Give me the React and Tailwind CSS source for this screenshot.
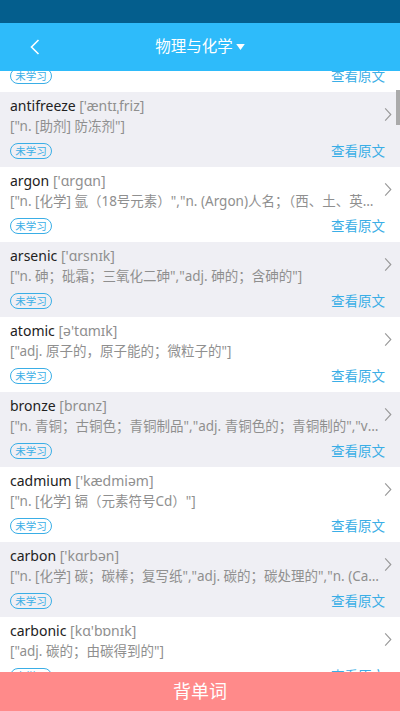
const words = [
  { word: "antibody", ph: "['æntɪˌbɑdi]", def: '["n. [免疫] 抗体"]' },
  { word: "antifreeze", ph: "['æntɪˌfriz]", def: '["n. [助剂] 防冻剂"]' },
  { word: "argon", ph: "['ɑrɡɑn]", def: '["n. [化学] 氩（18号元素）","n. (Argon)人名；（西、土、英）阿尔冈"]' },
  { word: "arsenic", ph: "['ɑrsnɪk]", def: '["n. 砷；砒霜；三氧化二砷","adj. 砷的；含砷的"]' },
  { word: "atomic", ph: "[ə'tɑmɪk]", def: '["adj. 原子的，原子能的；微粒子的"]' },
  { word: "bronze", ph: "[brɑnz]", def: '["n. 青铜；古铜色；青铜制品","adj. 青铜色的；青铜制的","vt. 镀青铜"]' },
  { word: "cadmium", ph: "['kædmiəm]", def: '["n. [化学] 镉（元素符号Cd）"]' },
  { word: "carbon", ph: "['kɑrbən]", def: '["n. [化学] 碳；碳棒；复写纸","adj. 碳的；碳处理的","n. (Carbon)人名"]' },
  { word: "carbonic", ph: "[kɑ'bɒnɪk]", def: '["adj. 碳的；由碳得到的"]' },
]

const Chevron = ({ className }) => (
  <svg viewBox="0 0 8 16" className={className} fill="none" stroke="currentColor" strokeWidth="1.2">
    <path d="M1 1.5 L7 8 L1 14.5" />
  </svg>
)

const WordRow = ({ item, gray }) => {
  return (
    <div className={`flex h-[75px] pl-[10px] ${gray ? "bg-[#efeff4]" : "bg-white"}`}>
      <div className="flex-1 min-w-0 pt-[4px]">
        <p className="text-[14px] leading-[20px] text-[#222] truncate">
          {item.word} <span className="text-[#8f8f8f]">{item.ph}</span>
        </p>
        <p className="text-[13.5px] leading-[20px] text-[#8f8f8f] truncate">{item.def}</p>
        <div className="flex items-center justify-between mt-[7px]">
          <span className="h-[16px] w-[42px] rounded-full border border-[#3aaee6] text-[#3aaee6] text-[10.5px] leading-[14px] flex items-center justify-center">
            未学习
          </span>
          <span className="text-[13.5px] leading-[16px] text-[#3aaee6] -mr-[3px]">查看原文</span>
        </div>
      </div>
      <div className="w-[18px] shrink-0 pt-[15px] pl-[2px] flex justify-start">
        <Chevron className="w-[8px] h-[15px] text-[#999]" />
      </div>
    </div>
  )
}

export default function App() {
  return (
    <div
      className="w-[400px] h-[711px] flex flex-col overflow-hidden bg-white"
      style={{ fontFamily: '"Noto Sans", "Noto Sans CJK SC", sans-serif' }}
    >
      <div className="h-[23px] bg-[#045e8d] shrink-0"></div>
      <header className="h-[48px] bg-[#2ebbfa] shrink-0 flex items-center relative z-10">
        <button className="w-[70px] h-full flex items-center justify-center">
          <svg viewBox="0 0 10 16" className="w-[10px] h-[16px]" fill="none" stroke="white" strokeWidth="1.6">
            <path d="M8.5 1 L1.5 8 L8.5 15" />
          </svg>
        </button>
        <div className="flex-1 flex items-center justify-center pr-[70px]">
          <span className="text-white text-[15.5px]">物理与化学</span>
          <svg viewBox="0 0 10 7" className="w-[9px] h-[6px] ml-[3px]" fill="white">
            <path d="M0 0 H10 L5 7 Z" />
          </svg>
        </div>
      </header>

      <div className="flex-1 overflow-hidden relative">
        <div className="-mt-[54px]">
          {words.map((item, i) => (
            <WordRow key={item.word} item={item} gray={i % 2 === 1} />
          ))}
        </div>
        <div className="absolute right-0 top-[19px] w-[4px] h-[35px] bg-[#aaaaaa]"></div>
      </div>

      <button className="h-[39px] shrink-0 bg-[#ff8a8a] text-white text-[18px]">背单词</button>
    </div>
  )
}
